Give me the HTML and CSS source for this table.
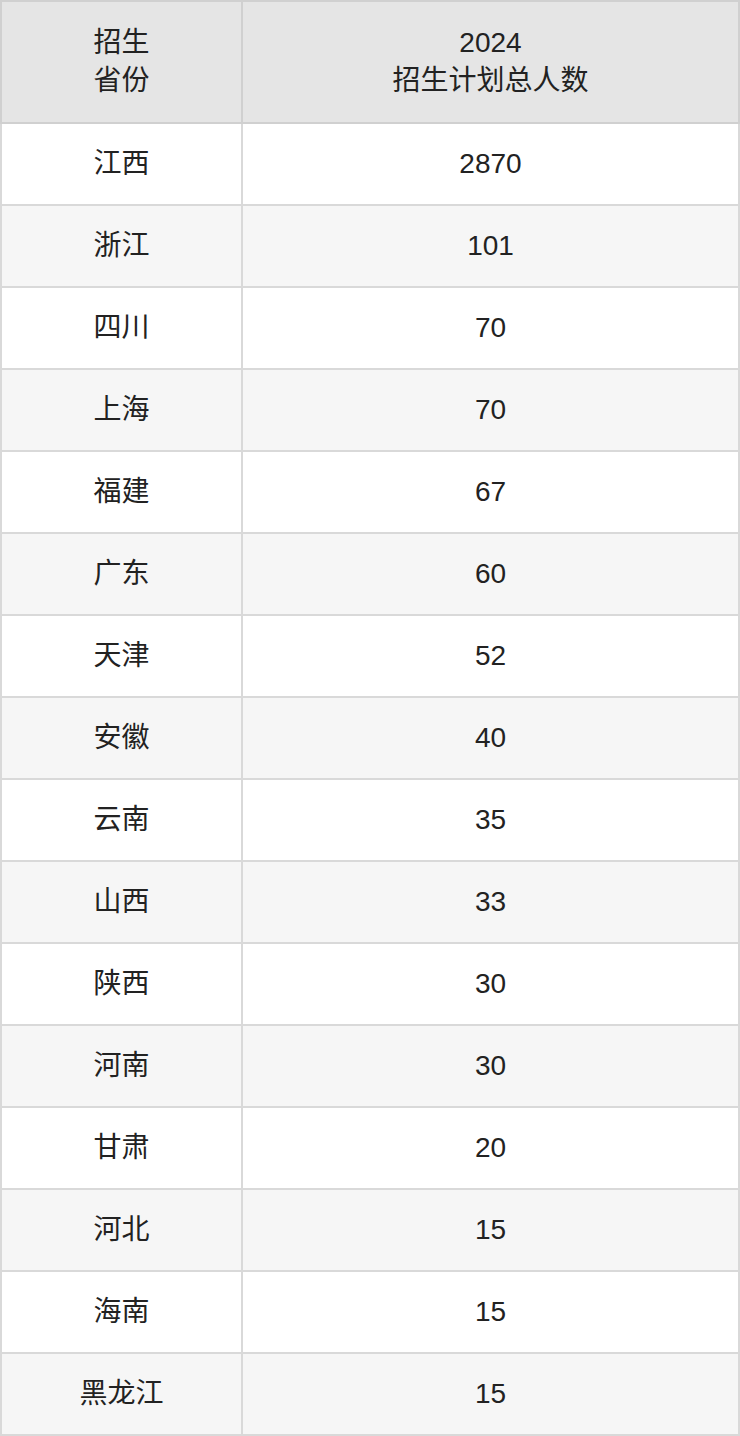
FILE: index.html
```html
<!DOCTYPE html>
<html lang="zh">
<head>
<meta charset="utf-8">
<link rel="stylesheet" href="styles.css">
</head>
<body>
<table class="plan">
  <thead>
    <tr><th class="c1">招生<br>省份</th><th class="c2">2024<br>招生计划总人数</th></tr>
  </thead>
  <tbody>
    <tr><td>江西</td><td>2870</td></tr>
    <tr><td>浙江</td><td>101</td></tr>
    <tr><td>四川</td><td>70</td></tr>
    <tr><td>上海</td><td>70</td></tr>
    <tr><td>福建</td><td>67</td></tr>
    <tr><td>广东</td><td>60</td></tr>
    <tr><td>天津</td><td>52</td></tr>
    <tr><td>安徽</td><td>40</td></tr>
    <tr><td>云南</td><td>35</td></tr>
    <tr><td>山西</td><td>33</td></tr>
    <tr><td>陕西</td><td>30</td></tr>
    <tr><td>河南</td><td>30</td></tr>
    <tr><td>甘肃</td><td>20</td></tr>
    <tr><td>河北</td><td>15</td></tr>
    <tr><td>海南</td><td>15</td></tr>
    <tr><td>黑龙江</td><td>15</td></tr>
  </tbody>
</table>
</body>
</html>
```
FILE: styles.css
```css
html, body {
  margin: 0;
  padding: 0;
  background: #ffffff;
}
.plan {
  width: 740px;
  border-collapse: collapse;
  table-layout: fixed;
  font-family: "Liberation Sans", Arial, "Noto Sans CJK SC", sans-serif;
  font-size: 28px;
  color: #222222;
}
.plan th, .plan td {
  border: 2px solid #d9d9d9;
  text-align: center;
  vertical-align: middle;
  padding: 0;
}
.plan th {
  font-weight: normal;
  background: #e5e5e5;
  height: 120px;
  line-height: 38px;
  border-color: #d0d0d0;
}
.plan .c1 { width: 239px; }
.plan td {
  height: 80px;
  line-height: 36px;
}
.plan tbody tr:nth-child(even) td {
  background: #f6f6f6;
}
```
